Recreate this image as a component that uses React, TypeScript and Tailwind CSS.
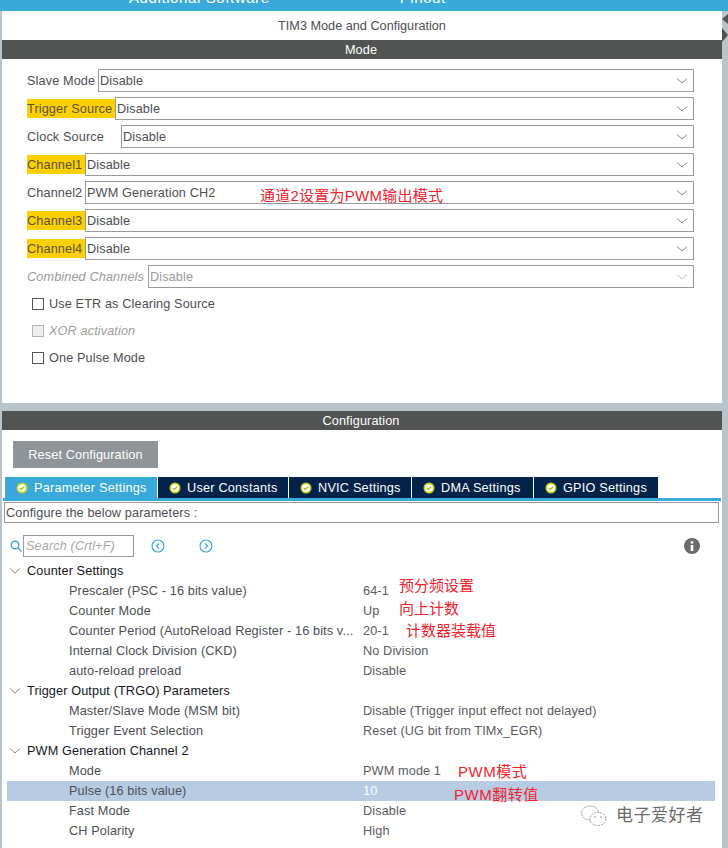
import * as React from 'react';

const font = { fontFamily: '"Liberation Sans", "Noto Sans CJK SC", sans-serif' };

const Chevron = ({ className }: { className: string }) => (
    <svg className={className} width="12" height="6" viewBox="0 0 12 6" fill="none" stroke="currentColor" strokeWidth="1">
        <path d="M1 .5l5 4.5 5-4.5" />
    </svg>
);

const Check = () => (
    <svg width="12" height="12" viewBox="0 0 12 12" className="shrink-0">
        <circle cx="6" cy="6" r="5.5" fill="#c5d31e" />
        <circle cx="6" cy="6" r="3.8" fill="#ffffff" />
        <path d="M3.8 6l1.6 1.6 2.8-3" fill="none" stroke="#a9b820" strokeWidth="1.3" />
    </svg>
);

const Select = ({ value, disabled }: { value: string; disabled?: boolean }) => (
    <div className={`flex h-[23px] flex-1 items-center justify-between border border-[#9a9a9a] bg-white pl-[1px] pr-[5px] ${disabled ? 'text-[#9b9b9b]' : 'text-[#4e4e54]'}`}>
        <span className="pt-[2px]">{value}</span>
        <Chevron className={disabled ? 'text-[#c4c4c4]' : 'text-[#8a8a8a]'} />
    </div>
);

const ModeRow = ({ label, value, width, warn, disabled }: { label: string; value: string; width: string; warn?: boolean; disabled?: boolean }) => (
    <div className="flex h-[23px] items-center">
        <div className={`flex h-[19px] shrink-0 items-center whitespace-nowrap ${width} ${warn ? 'bg-[#ffd000] text-[#5b5340]' : ''} ${disabled ? 'text-[#9b9b9b] italic' : ''}`}>
            <span className="pt-[2px]">{label}</span>
        </div>
        <Select value={value} disabled={disabled} />
    </div>
);

const CheckRow = ({ label, disabled }: { label: string; disabled?: boolean }) => (
    <div className={`flex h-[12px] items-center gap-[5px] ${disabled ? 'italic text-[#a0a0a0]' : ''}`}>
        <div className={`h-[12px] w-[12px] border ${disabled ? 'border-[#b5b5b5] bg-[#eeeeee]' : 'border-[#555555] bg-white'}`} />
        <span className="pt-[1px]">{label}</span>
    </div>
);

const Tab = ({ label, width, active }: { label: string; width: string; active?: boolean }) => (
    <div className={`flex h-[21px] items-center gap-[6px] pl-[11px] tracking-[0.22px] text-white ${width} ${active ? 'bg-[#39a9dc]' : 'bg-[#03234b]'}`}>
        <Check />
        <span className="whitespace-nowrap pt-[2px]">{label}</span>
    </div>
);

const Group = ({ label }: { label: string }) => (
    <div className="flex h-[20px] items-center text-[#16161e]">
        <Chevron className="ml-[7px] mr-[6px] text-[#8a8a8a]" />
        <span className="pt-[2px]">{label}</span>
    </div>
);

const Param = ({ label, value, selected }: { label: string; value: string; selected?: boolean }) => (
    <div className={`ml-[5px] mr-[7px] flex h-[20px] items-center pt-[2px] ${selected ? 'bg-[#b7cce3]' : ''}`}>
        <span className="w-[356px] whitespace-nowrap pl-[62px]">{label}</span>
        <span className={`whitespace-nowrap ${selected ? 'text-white' : 'text-[#5c5c62]'}`}>{value}</span>
    </div>
);

const Note = ({ children, className }: { children: React.ReactNode; className: string }) => (
    <span className={`absolute whitespace-nowrap text-[15px] leading-[18px] text-[#f5222d] ${className}`}>{children}</span>
);

export default function App() {
    return (
        <div className="relative flex h-[848px] w-[728px] flex-col overflow-hidden bg-[#b8c4cb] text-[12.7px] tracking-[0.12px] text-[#4e4e54]" style={font}>
            <div className="flex h-[11px] shrink-0 items-end overflow-hidden bg-[#39a9dc] text-[15px] leading-[18px] tracking-[0.6px] text-white">
                <span className="mb-[4px] ml-[129px] whitespace-nowrap">Additional Software</span>
                <span className="mb-[4px] ml-[130px] whitespace-nowrap">Pinout</span>
            </div>

            <div className="flex min-h-0 flex-1 flex-col pl-[2px]">
                <div className="mr-[6px] flex h-[392px] shrink-0 flex-col bg-white">
                    <div className="flex h-[29px] items-center justify-center pt-[2px] tracking-normal">TIM3 Mode and Configuration</div>
                    <div className="flex h-[19px] items-center justify-center bg-[#525453] pt-[2px] pr-[2px] text-white">Mode</div>
                    <div className="flex flex-col gap-[5px] pl-[25px] pr-[28px] pt-[10px]">
                        <ModeRow label="Slave Mode" value="Disable" width="w-[71px]" />
                        <ModeRow label="Trigger Source" value="Disable" width="w-[88px]" warn />
                        <ModeRow label="Clock Source" value="Disable" width="w-[94px]" />
                        <ModeRow label="Channel1" value="Disable" width="w-[58px]" warn />
                        <ModeRow label="Channel2" value="PWM Generation CH2" width="w-[58px]" />
                        <ModeRow label="Channel3" value="Disable" width="w-[58px]" warn />
                        <ModeRow label="Channel4" value="Disable" width="w-[58px]" warn />
                        <ModeRow label="Combined Channels" value="Disable" width="w-[121px]" disabled />
                    </div>
                    <div className="flex flex-col gap-[15px] pl-[30px] pt-[10px]">
                        <CheckRow label="Use ETR as Clearing Source" />
                        <CheckRow label="XOR activation" disabled />
                        <CheckRow label="One Pulse Mode" />
                    </div>
                </div>

                <div className="h-[8px] shrink-0" />

                <div className="mr-[6px] flex min-h-0 flex-1 flex-col bg-white">
                    <div className="flex h-[19px] shrink-0 items-center justify-center bg-[#525453] pt-[2px] pr-[2px] text-white">Configuration</div>
                    <div className="pl-[11px] pt-[11px]">
                        <div className="flex h-[27px] w-[145px] items-center justify-center bg-[#8f9499] pt-[2px] text-white">Reset Configuration</div>
                    </div>
                    <div className="ml-[3px] mt-[9px] flex gap-[1px]">
                        <Tab label="Parameter Settings" width="w-[152px]" active />
                        <Tab label="User Constants" width="w-[130px]" />
                        <Tab label="NVIC Settings" width="w-[122px]" />
                        <Tab label="DMA Settings" width="w-[121px]" />
                        <Tab label="GPIO Settings" width="w-[124px]" />
                    </div>
                    <div className="ml-[1px] mr-[1px] h-[3px] shrink-0 bg-[#39a9dc]" />
                    <div className="ml-[2px] mr-[3px] mt-[1px] flex h-[21px] shrink-0 items-center border border-[#9a9a9a] pl-[1px] pt-[2px]">Configure the below parameters :</div>

                    <div className="mt-[12px] flex h-[22px] shrink-0 items-center pl-[8px]">
                        <svg width="12" height="12" viewBox="0 0 12 12" fill="none" stroke="#39a9dc" strokeWidth="1.4">
                            <circle cx="5" cy="5" r="3.8" />
                            <path d="M8 8l3.5 3.5" />
                        </svg>
                        <div className="ml-[1px] flex h-[22px] w-[111px] items-center border border-[#9a9a9a] pl-[2px] pt-[2px] italic text-[#a8a8a8]">Search (Crtl+F)</div>
                        <svg className="ml-[17px]" width="14" height="14" viewBox="0 0 14 14" fill="none" stroke="#39a9dc" strokeWidth="1.2">
                            <circle cx="7" cy="7" r="6" />
                            <path d="M8 4.5L5.5 7 8 9.5" />
                        </svg>
                        <svg className="ml-[34px]" width="14" height="14" viewBox="0 0 14 14" fill="none" stroke="#39a9dc" strokeWidth="1.2">
                            <circle cx="7" cy="7" r="6" />
                            <path d="M6 4.5L8.5 7 6 9.5" />
                        </svg>
                        <svg className="ml-[471px]" width="16" height="16" viewBox="0 0 16 16">
                            <circle cx="8" cy="8" r="8" fill="#6b6b6b" />
                            <rect x="6.7" y="7" width="2.6" height="6" fill="#ffffff" />
                            <rect x="6.7" y="3.2" width="2.6" height="2.4" fill="#ffffff" />
                        </svg>
                    </div>

                    <div className="mt-[4px] flex flex-col">
                        <Group label="Counter Settings" />
                        <Param label="Prescaler (PSC - 16 bits value)" value="64-1" />
                        <Param label="Counter Mode" value="Up" />
                        <Param label="Counter Period (AutoReload Register - 16 bits v..." value="20-1" />
                        <Param label="Internal Clock Division (CKD)" value="No Division" />
                        <Param label="auto-reload preload" value="Disable" />
                        <Group label="Trigger Output (TRGO) Parameters" />
                        <Param label="Master/Slave Mode (MSM bit)" value="Disable (Trigger input effect not delayed)" />
                        <Param label="Trigger Event Selection" value="Reset (UG bit from TIMx_EGR)" />
                        <Group label="PWM Generation Channel 2" />
                        <Param label="Mode" value="PWM mode 1" />
                        <Param label="Pulse (16 bits value)" value="10" selected />
                        <Param label="Fast Mode" value="Disable" />
                        <Param label="CH Polarity" value="High" />
                    </div>
                </div>
            </div>

            <svg className="absolute left-[722px] top-[14px]" width="6" height="28" viewBox="0 0 6 28" fill="#525453">
                <path d="M6 0v10L0 5z" />
                <path d="M0 14v14l6-7z" />
            </svg>

            <Note className="left-[260px] top-[187px] tracking-[0.25px]">通道2设置为PWM输出模式</Note>
            <Note className="left-[399px] top-[577px] tracking-normal">预分频设置</Note>
            <Note className="left-[399px] top-[600px] tracking-normal">向上计数</Note>
            <Note className="left-[406px] top-[622px] tracking-normal">计数器装载值</Note>
            <Note className="left-[458px] top-[763px] tracking-[0.5px]">PWM模式</Note>
            <Note className="left-[454px] top-[786px] tracking-[0.5px]">PWM翻转值</Note>

            <div className="absolute left-[580px] top-[804px] flex items-center gap-[8px] tracking-[0.5px] text-[#6a6a6a]">
                <svg width="28" height="24" viewBox="0 0 28 24" fill="#ffffff" stroke="#9a9a9a" strokeWidth="1" strokeDasharray="2 1">
                    <ellipse cx="10" cy="9" rx="8.5" ry="7" />
                    <ellipse cx="18" cy="15" rx="8" ry="6.5" />
                    <circle cx="15" cy="13" r="0.7" fill="#777777" stroke="none" />
                    <circle cx="21" cy="13" r="0.7" fill="#777777" stroke="none" />
                </svg>
                <span className="text-[17px] leading-[22px]">电子爱好者</span>
            </div>
        </div>
    );
}
